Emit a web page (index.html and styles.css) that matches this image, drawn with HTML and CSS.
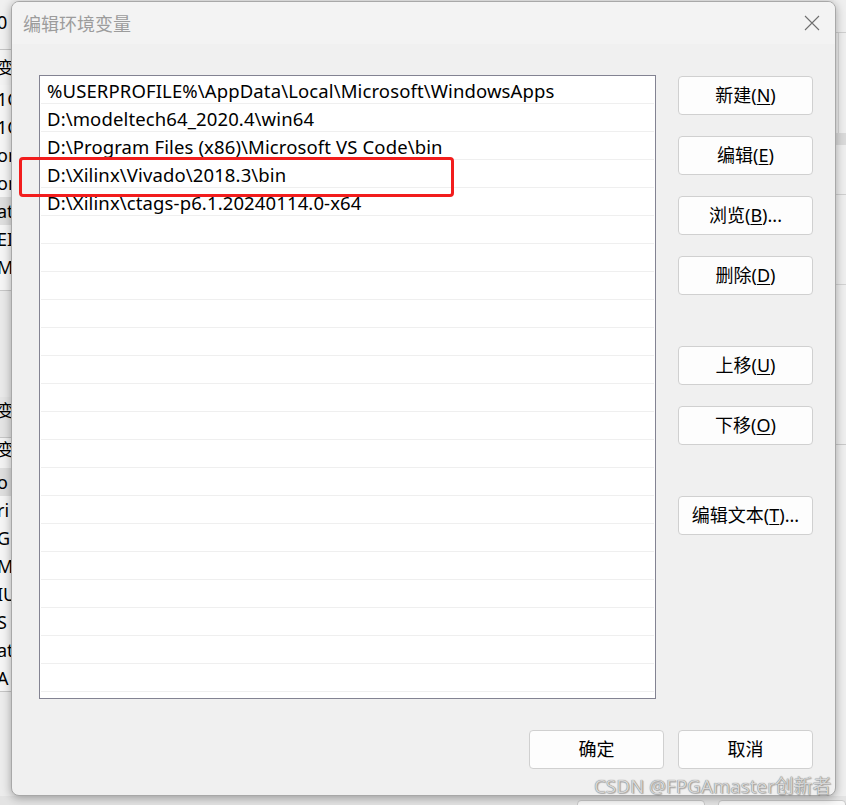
FILE: index.html
```html
<!DOCTYPE html>
<html lang="zh-CN">
<head>
<meta charset="utf-8">
<title>编辑环境变量</title>
<link rel="stylesheet" href="styles.css">
</head>
<body>
<div class="screen">
  <div class="backwin">
    <div class="bw-left">
      <div class="bw-top"><span class="bw-t">0</span></div>
      <div class="bw-hdr"><span class="bw-t">变量</span></div>
      <div class="bw-row"><span class="bw-t">1C</span></div>
      <div class="bw-row"><span class="bw-t">1C</span></div>
      <div class="bw-row"><span class="bw-t">on</span></div>
      <div class="bw-row"><span class="bw-t">on</span></div>
      <div class="bw-row sel"><span class="bw-t">at</span></div>
      <div class="bw-row"><span class="bw-t">EI</span></div>
      <div class="bw-row"><span class="bw-t">M</span></div>
      <div class="bw-sep"></div>
      <div class="bw-gap"></div>
      <div class="bw-hdr2"><span class="bw-t">变</span></div>
      <div class="bw-hdr3"><span class="bw-t">变量</span></div>
      <div class="bw-row sel"><span class="bw-t">o</span></div>
      <div class="bw-row"><span class="bw-t">ri</span></div>
      <div class="bw-row"><span class="bw-t">G</span></div>
      <div class="bw-row"><span class="bw-t">M</span></div>
      <div class="bw-row"><span class="bw-t">IU</span></div>
      <div class="bw-row"><span class="bw-t">S</span></div>
      <div class="bw-row"><span class="bw-t">at</span></div>
      <div class="bw-row last"><span class="bw-t">A</span></div>
    </div>
    <div class="bw-right">
      <div class="br-a"></div>
      <div class="br-b"></div>
      <div class="br-c"></div>
      <div class="br-d"></div>
      <div class="br-e"></div>
      <div class="br-f"></div>
    </div>
    <div class="bw-bottom">
      <span class="bw-btn"></span>
      <span class="bw-btn"></span>
    </div>
  </div>

  <div class="dialog">
    <div class="titlebar">
      <span class="title">编辑环境变量</span>
      <svg class="close" width="16" height="16" viewBox="0 0 16 16" aria-hidden="true">
        <path d="M1 1 L15 15 M15 1 L1 15" stroke="#6f6f6f" stroke-width="1.1" fill="none"/>
      </svg>
    </div>
    <div class="dlg-body">
      <div class="content">
        <div class="listbox">
          <div class="row">%USERPROFILE%\AppData\Local\Microsoft\WindowsApps</div>
          <div class="row">D:\modeltech64_2020.4\win64</div>
          <div class="row">D:\Program Files (x86)\Microsoft VS Code\bin</div>
          <div class="row">D:\Xilinx\Vivado\2018.3\bin</div>
          <div class="row">D:\Xilinx\ctags-p6.1.20240114.0-x64</div>
          <div class="row"></div><div class="row"></div><div class="row"></div>
          <div class="row"></div><div class="row"></div><div class="row"></div>
          <div class="row"></div><div class="row"></div><div class="row"></div>
          <div class="row"></div><div class="row"></div><div class="row"></div>
          <div class="row"></div><div class="row"></div><div class="row"></div>
          <div class="row"></div><div class="row"></div>
        </div>
        <div class="side">
          <button class="btn">新建(<u>N</u>)</button>
          <button class="btn">编辑(<u>E</u>)</button>
          <button class="btn">浏览(<u>B</u>)...</button>
          <button class="btn">删除(<u>D</u>)</button>
          <button class="btn spaced">上移(<u>U</u>)</button>
          <button class="btn">下移(<u>O</u>)</button>
          <button class="btn spaced">编辑文本(<u>T</u>)...</button>
        </div>
      </div>
      <div class="footer">
        <button class="btn">确定</button>
        <button class="btn">取消</button>
      </div>
    </div>
  </div>

  <div class="highlight"></div>
  <div class="watermark">CSDN @FPGAmaster创新者</div>
</div>
</body>
</html>
```

FILE: styles.css
```css
* { box-sizing: border-box; }

html, body {
  margin: 0;
  padding: 0;
}

body {
  width: 846px;
  height: 805px;
  overflow: hidden;
  background: #e8e8e8;
  font-family: "Noto Sans", "Noto Sans CJK SC", sans-serif;
  color: #000;
}

.screen {
  position: relative;
  width: 846px;
  height: 805px;
  overflow: hidden;
}

/* ---------- background window (mostly hidden) ---------- */
.backwin {
  display: grid;
  grid-template-columns: 30px 1fr 12px;
  grid-template-rows: 796px 9px;
  width: 846px;
  height: 805px;
  background: #ececec;
}

.bw-left {
  display: flex;
  flex-direction: column;
  overflow: hidden;
  font-size: 18px;
  line-height: 28px;
  background: #ececec;
}

.bw-t {
  display: block;
  margin-left: -3px;
  white-space: nowrap;
}

.bw-top {
  height: 50px;
  padding-top: 8px;
  background: #f0f0f0;
  border-bottom: 1px solid #c4c4c4;
}

.bw-hdr {
  height: 35px;
  padding-top: 4px;
  background: #f3f3f3;
  font-size: 17px;
}

.bw-row {
  height: 28px;
  background: #f5f5f5;
}

.bw-row.sel { background: #dedede; }
.bw-row.last { border-bottom: 1px solid #c4c4c4; }

.bw-sep {
  height: 10px;
  background: #f5f5f5;
  border-bottom: 1px solid #c6c6c6;
}

.bw-gap {
  height: 106px;
  background: #e9e9e9;
}

.bw-hdr2 {
  height: 41px;
  padding-top: 0;
  background: #e4e4e4;
  font-size: 17px;
  border-bottom: 1px solid #c6c6c6;
}

.bw-hdr3 {
  height: 30px;
  background: #f2f2f2;
  font-size: 17px;
  line-height: 24px;
}

.bw-right {
  grid-column: 3;
  display: flex;
  flex-direction: column;
  background: #efefef;
}

.br-a { height: 33px; border-bottom: 1px solid #cfcfcf; }
.br-b { height: 100px; border-left: 1px solid #d6d6d6; margin-left: 4px; }
.br-c { height: 12px; background: #dadada; }
.br-d { height: 50px; border-bottom: 1px solid #cfcfcf; }
.br-e { height: 90px; border-bottom: 1px solid #d2d2d2; }
.br-f { height: 160px; border-bottom: 1px solid #c9c9c9; }

.bw-bottom {
  grid-column: 1 / 4;
  grid-row: 2;
  display: flex;
  gap: 13px;
  padding: 4px 0 0 577px;
  background: #e3e3e3;
}

.bw-btn {
  width: 135px;
  height: 30px;
  border: 1px solid #c8c8c8;
  border-radius: 4px;
  background: #f8f8f8;
}

/* ---------- dialog ---------- */
.dialog {
  position: absolute;
  left: 11px;
  top: 1px;
  width: 825px;
  height: 795px;
  border: 1px solid #a8a8a8;
  border-radius: 8px;
  background: #f0f0f0;
  box-shadow: 0 2px 10px rgba(0, 0, 0, 0.32);
  overflow: hidden;
  display: flex;
  flex-direction: column;
}

.titlebar {
  height: 42px;
  flex: none;
  display: flex;
  align-items: center;
  justify-content: space-between;
  padding: 0 15px 0 11px;
  background: #f3f3f3;
}

.title {
  font-family: "Noto Sans CJK SC", sans-serif;
  font-size: 18px;
  color: #9c9c9c;
}

.close {
  display: block;
}

.dlg-body {
  flex: 1;
  display: flex;
  flex-direction: column;
  padding: 31px 22px 26px 27px;
}

.content {
  display: flex;
  gap: 22px;
}

.listbox {
  width: 617px;
  height: 624px;
  flex: none;
  border: 1px solid #838392;
  background: #fff;
  padding: 0 1px;
  overflow: hidden;
}

.row {
  height: 28px;
  padding-left: 6px;
  border-bottom: 1px solid #efefef;
  font-size: 18.5px;
  letter-spacing: 0.12px;
  line-height: 29px;
  white-space: nowrap;
  color: #000;
}

.side {
  display: flex;
  flex-direction: column;
  gap: 21px;
  padding-top: 1px;
}

.btn {
  width: 135px;
  height: 39px;
  padding: 0;
  border: 1px solid #d0d0d0;
  border-radius: 4px;
  background: #fdfdfd;
  font-family: "Noto Sans", "Noto Sans CJK SC", sans-serif;
  font-size: 18px;
  color: #000;
  line-height: 37px;
  text-align: center;
  white-space: nowrap;
}

.btn u {
  text-decoration: underline;
  text-underline-offset: 2px;
  text-decoration-thickness: 1px;
}

.btn.spaced { margin-top: 30px; }

.footer {
  margin-top: 31px;
  display: flex;
  justify-content: flex-end;
  gap: 14px;
}

/* ---------- overlays ---------- */
.highlight {
  position: absolute;
  left: 19px;
  top: 157px;
  width: 435px;
  height: 40px;
  border: 3px solid #f21d1d;
  border-radius: 4px;
}

.watermark {
  position: absolute;
  left: 594px;
  top: 773px;
  font-family: "Noto Sans", "Noto Sans CJK SC", sans-serif;
  font-size: 18.8px;
  line-height: 26px;
  color: #d6d6d6;
  text-shadow: 0 0 1px #5e5e5e, 1px 1px 1px rgba(0, 0, 0, 0.25);
  white-space: nowrap;
}
```
